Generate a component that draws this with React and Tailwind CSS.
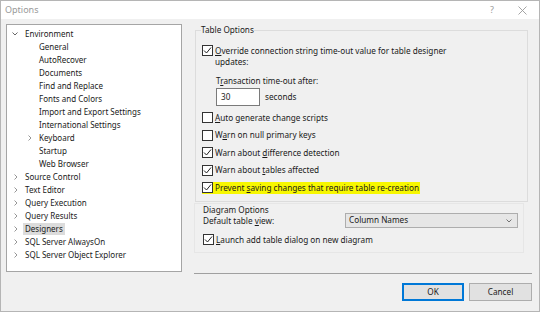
import React from 'react';

const font = { fontFamily: '"Noto Sans", "Open Sans", sans-serif' };

const Chevron = ({ open }) => (
    <svg width="6" height="6" viewBox="0 0 6 6" className="shrink-0">
        {open
            ? <path d="M0.5 1.5 L3 4 L5.5 1.5" fill="none" stroke="#555" strokeWidth="0.9" />
            : <path d="M1.5 0.5 L4 3 L1.5 5.5" fill="none" stroke="#8a8a8a" strokeWidth="0.9" />}
    </svg>
);

const TreeRow = ({ label, depth = 0, chevron, selected }) => (
    <div className="h-[13px] flex items-center">
        <div className={depth === 0 ? 'w-[16px] flex items-center' : 'w-[30px] flex items-center'}>
            {chevron === 'open' && <div className="ml-[4.5px] flex"><Chevron open /></div>}
            {chevron === 'closed' && <div className={depth === 0 ? 'ml-[5.5px] flex' : 'ml-[19.5px] flex'}><Chevron /></div>}
        </div>
        <span className={`leading-[12px] px-[2px] ${selected ? 'bg-[#dcdcdc]' : ''}`}>{label}</span>
    </div>
);

const Check = ({ checked }) => (
    <span className="w-[11px] h-[11px] border border-[#333] bg-white flex items-center justify-center shrink-0">
        {checked && (
            <svg width="9" height="9" viewBox="0 0 9 9">
                <path d="M1 4.5 L3.5 7 L8 1.5" fill="none" stroke="#222" strokeWidth="1" />
            </svg>
        )}
    </span>
);

const CheckRow = ({ checked, pre, u, post, highlight }) => (
    <div className="h-[17.5px] flex items-center">
        <div className={`flex items-center gap-[2px] h-[12px] ${highlight ? 'bg-[#f7f700]' : ''}`}>
            <Check checked={checked} />
            <span className="leading-[12px] pr-[1px]">{pre}<span className="underline">{u}</span>{post}</span>
        </div>
    </div>
);

export default function App() {
    const envChildren = ['General', 'AutoRecover', 'Documents', 'Find and Replace', 'Fonts and Colors', 'Import and Export Settings', 'International Settings'];
    const tops = ['Source Control', 'Text Editor', 'Query Execution', 'Query Results', 'Designers', 'SQL Server AlwaysOn', 'SQL Server Object Explorer'];

    return (
        <div className="w-[540px] h-[312px] bg-[#f0f0f0] border border-[#b5b5b5] flex flex-col text-[8.2px] text-[#1a1a1a] overflow-hidden" style={font}>
            <div className="h-[18px] bg-white flex items-center justify-between pl-[4px] pr-[12px] shrink-0">
                <span className="text-[#9a9a9a] text-[9px]">Options</span>
                <div className="flex items-center gap-[24px] text-[#9a9a9a]">
                    <span className="text-[9px]">?</span>
                    <svg width="9" height="9" viewBox="0 0 9 9">
                        <path d="M0.5 0.5 L8.5 8.5 M8.5 0.5 L0.5 8.5" stroke="#9a9a9a" strokeWidth="0.9" />
                    </svg>
                </div>
            </div>

            <div className="flex flex-1 pt-[5px] pl-[5px]">
                <div className="w-[176px] h-[248px] bg-white border border-[#a5a5a5] pt-[2px] shrink-0 text-[8px]">
                    <TreeRow label="Environment" chevron="open" />
                    {envChildren.map(l => <TreeRow key={l} label={l} depth={1} />)}
                    <TreeRow label="Keyboard" depth={1} chevron="closed" />
                    <TreeRow label="Startup" depth={1} />
                    <TreeRow label="Web Browser" depth={1} />
                    {tops.map(l => <TreeRow key={l} label={l} chevron="closed" selected={l === 'Designers'} />)}
                </div>

                <div className="flex flex-col flex-1 pl-[11px] pr-[7px]">
                    <fieldset className="border border-[#dcdcdc] ml-[2px] mr-[4px] pl-[6px] h-[178px]">
                        <legend className="ml-[-1px] px-0 leading-[12px]">Table Options</legend>
                        <div className="pt-[9px] flex items-start gap-[2px]">
                            <Check checked />
                            <div className="leading-[11px]">
                                <span className="underline">O</span>verride connection string time-out value for table designer<br />updates:
                            </div>
                        </div>
                        <div className="pl-[14px] pt-[8px] leading-[12px]">T<span className="underline">r</span>ansaction time-out after:</div>
                        <div className="pl-[14px] pt-[1px] flex items-center gap-[5px]">
                            <div className="w-[44px] h-[18px] bg-white border border-[#7a7a7a] flex items-center pl-[4px]">30</div>
                            <span>seconds</span>
                        </div>
                        <div className="pt-[3px]">
                            <CheckRow pre="" u="A" post="uto generate change scripts" />
                            <CheckRow pre="W" u="a" post="rn on null primary keys" />
                            <CheckRow checked pre="Warn about " u="d" post="ifference detection" />
                            <CheckRow checked pre="Warn about " u="t" post="ables affected" />
                            <CheckRow checked pre="Prevent " u="s" post="aving changes that require table re-creation" highlight />
                        </div>
                    </fieldset>

                    <div className="border border-[#e6e6e6] mt-[1px] ml-[1px] mr-[8px] pl-[8px] h-[50px]">
                        <div className="leading-[11px]">Diagram Options</div>
                        <div className="flex items-center justify-between pr-[5px] h-[15px] mt-[-2px]">
                            <span className="pt-[1px]">Default table <span className="underline">v</span>iew:</span>
                            <div className="w-[173px] h-[15px] bg-[#e6e6e6] border border-[#adadad] flex items-center justify-between pl-[3px] pr-[5px]">
                                <span>Column Names</span>
                                <svg width="6" height="4" viewBox="0 0 6 4">
                                    <path d="M0.5 0.5 L3 3 L5.5 0.5" fill="none" stroke="#555" strokeWidth="0.8" />
                                </svg>
                            </div>
                        </div>
                        <div className="pt-[3px]">
                            <CheckRow checked pre="" u="L" post="aunch add table dialog on new diagram" />
                        </div>
                    </div>

                    <div className="h-px bg-[#a0a0a0] mt-[20px] ml-[1px]" />

                    <div className="flex justify-end gap-[5px] mt-[9px]">
                        <button className="w-[62px] h-[18px] bg-[#e1e1e1] border border-[#0078d7] shadow-[inset_0_0_0_1px_#0078d7] leading-none">OK</button>
                        <button className="w-[63px] h-[18px] bg-[#e1e1e1] border border-[#adadad] leading-none">Cancel</button>
                    </div>
                </div>
            </div>
        </div>
    );
}
